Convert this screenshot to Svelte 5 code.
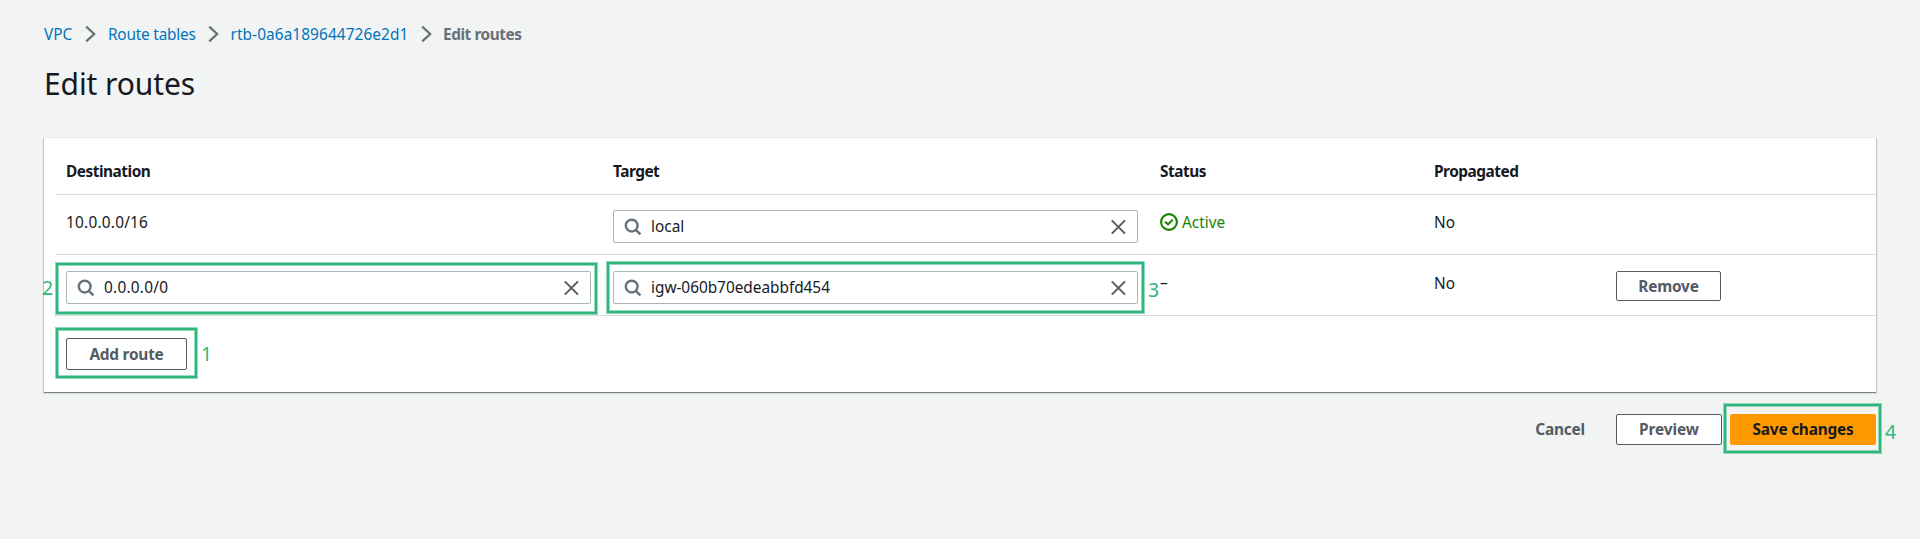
<script>
  const crumbs = [
    { text: 'VPC', w: 28, spacing: 0 },
    { text: 'Route tables', w: 86.5, spacing: -0.22 },
    { text: 'rtb-0a6a189644726e2d1', w: 177, spacing: 0.08 }
  ];
</script>

{#snippet field(value, spacing = 0)}
  <div class="field">
    <svg class="search" width="18" height="18" viewBox="0 0 18 18" fill="none" stroke="#687078" stroke-width="2.4">
      <circle cx="7.7" cy="7.6" r="5.9" />
      <path d="M11.8 11.8 16.4 16.4" />
    </svg>
    <span class="value" style="letter-spacing: {spacing}px">{value}</span>
    <svg width="16" height="16" viewBox="0 0 16 16" fill="none" stroke="#545b64" stroke-width="2">
      <path d="M1.8 1.4 15 14.6M15 1.4 1.8 14.6" />
    </svg>
  </div>
{/snippet}

<main>
  <nav>
    {#each crumbs as crumb}
      <a href="#top" style="width: {crumb.w}px; letter-spacing: {crumb.spacing}px">{crumb.text}</a>
      <svg width="11" height="18" viewBox="0 0 11 18" fill="none" stroke="#687078" stroke-width="2.2">
        <path d="M1.2 1.6 9.2 9 1.2 16.4" />
      </svg>
    {/each}
    <strong>Edit routes</strong>
  </nav>
  <h1>Edit routes</h1>

  <section class="card">
    <div class="row head">
      <div>Destination</div>
      <div>Target</div>
      <div>Status</div>
      <div>Propagated</div>
      <div></div>
    </div>
    <div class="row first">
      <div class="text cidr">10.0.0.0/16</div>
      <div class="control">{@render field('local')}</div>
      <div class="text status">
        <svg width="18" height="18" viewBox="0 0 18 18" fill="none" stroke="#1d8102" stroke-width="2.1">
          <circle cx="9" cy="9" r="7.9" />
          <path d="M5 8.8 8 11.4 12.7 6.7" />
        </svg>
        <span>Active</span>
      </div>
      <div class="text">No</div>
      <div></div>
    </div>
    <div class="row second">
      <div class="control">
        {@render field('0.0.0.0/0', 0.23)}
        <div class="mark dest"><span>2</span></div>
      </div>
      <div class="control">
        {@render field('igw-060b70edeabbfd454', -0.03)}
        <div class="mark target"><span>3</span></div>
      </div>
      <div class="text"><span class="dash">–</span></div>
      <div class="text">No</div>
      <div class="control"><button class="remove">Remove</button></div>
    </div>
    <div class="add">
      <button>Add route</button>
      <div class="mark new"><span>1</span></div>
    </div>
  </section>

  <footer>
    <button class="link">Cancel</button>
    <button class="preview">Preview</button>
    <div class="save">
      <button class="primary">Save changes</button>
      <div class="mark commit"><span>4</span></div>
    </div>
  </footer>
</main>

<style>
  :global(body) {
    background: #f2f3f3;
  }
  main {
    box-sizing: border-box;
    height: 539px;
    padding: 24px 44px 0;
    overflow: hidden;
    background: #f2f3f3;
    color: #16191f;
    font: 15.4px/22px 'Noto Sans', sans-serif;
  }
  nav {
    display: flex;
    align-items: center;
    height: 22px;
    white-space: nowrap;
  }
  nav a {
    color: #0073bb;
    text-decoration: none;
  }
  nav svg {
    position: relative;
    top: -1px;
    margin: 0 12px 0 13px;
    flex: none;
  }
  nav strong {
    margin-left: -0.5px;
    color: #687078;
    letter-spacing: -0.45px;
  }
  h1 {
    margin: 18px 0 34px;
    font-size: 30px;
    line-height: 40px;
    font-weight: 400;
    letter-spacing: -0.1px;
  }
  .card {
    box-sizing: border-box;
    height: 254px;
    padding-left: 11px;
    background: #fff;
    box-shadow: 0 1px 1px 0 rgba(0, 28, 36, 0.3), 1px 1px 1px 0 rgba(0, 28, 36, 0.15),
      -1px 1px 1px 0 rgba(0, 28, 36, 0.15), 0 0 0 1px #eaeded;
  }
  .row {
    box-sizing: border-box;
    display: grid;
    grid-template-columns: 547px 547px 274px 182px 273px;
    width: 1823px;
    border-bottom: 1px solid #d9dcdc;
  }
  .row > div {
    padding-left: 11px;
  }
  .head {
    height: 57px;
    padding-top: 23px;
    font-weight: 700;
    letter-spacing: -0.48px;
  }
  .first {
    height: 60px;
    padding-top: 15px;
  }
  .second {
    height: 61px;
    padding-top: 16px;
  }
  .text {
    padding-top: 2px;
  }
  .cidr {
    letter-spacing: 0.22px;
  }
  .dash {
    position: relative;
    top: -1px;
  }
  .control {
    position: relative;
  }
  .field {
    box-sizing: border-box;
    display: flex;
    align-items: center;
    width: 525px;
    height: 33px;
    padding: 0 11px 0 10px;
    border: 1px solid #aab7b8;
    border-radius: 2px;
    background: #fff;
  }
  .value {
    flex: 1;
    margin-left: 9px;
    padding-top: 1px;
  }
  .status {
    display: flex;
    align-items: center;
    align-self: start;
    gap: 4px;
    color: #1d8102;
  }
  .status svg {
    position: relative;
    top: -1px;
  }
  button {
    box-sizing: border-box;
    display: block;
    height: 32px;
    width: 121px;
    padding: 1px 0 0;
    border: 1px solid #545b64;
    border-radius: 2px;
    background: #fff;
    color: #545b64;
    font: 700 15.4px/22px 'Noto Sans', sans-serif;
    letter-spacing: -0.22px;
    white-space: nowrap;
  }
  .remove {
    width: 105px;
    height: 30px;
  }
  .add {
    position: relative;
    padding: 22px 0 0 11px;
  }
  footer {
    display: flex;
    justify-content: flex-end;
    padding-top: 22px;
  }
  .link {
    width: 50px;
    height: 31px;
    margin-right: 31px;
    border: 0;
    background: none;
  }
  .preview {
    width: 106px;
    height: 31px;
    margin-right: 8px;
    letter-spacing: -0.1px;
  }
  .save {
    position: relative;
  }
  .primary {
    width: 146px;
    height: 31px;
    border-color: #ff9900;
    background: #ff9900;
    color: #16191f;
  }
  .mark {
    position: absolute;
    box-sizing: border-box;
    border: 1px solid #2eb67d80;
    box-shadow: inset 0 0 0 2px #2eb67d, inset 0 0 0 3px #2eb67d80;
    color: #2eb67d;
    font-size: 19.5px;
    line-height: 24px;
    pointer-events: none;
  }
  .mark span {
    position: absolute;
    left: calc(100% + 4px);
  }
  .dest {
    left: 0;
    top: -9px;
    width: 543px;
    height: 53px;
  }
  .dest span {
    left: -14px;
    top: 13px;
  }
  .target {
    left: 4px;
    top: -10px;
    width: 539px;
    height: 53px;
  }
  .target span {
    top: 16px;
  }
  .new {
    left: 0;
    top: 11px;
    width: 143px;
    height: 52px;
  }
  .new span {
    top: 14px;
  }
  .commit {
    left: -7px;
    top: -11px;
    width: 159px;
    height: 51px;
  }
  .commit span {
    top: 16px;
  }
</style>
